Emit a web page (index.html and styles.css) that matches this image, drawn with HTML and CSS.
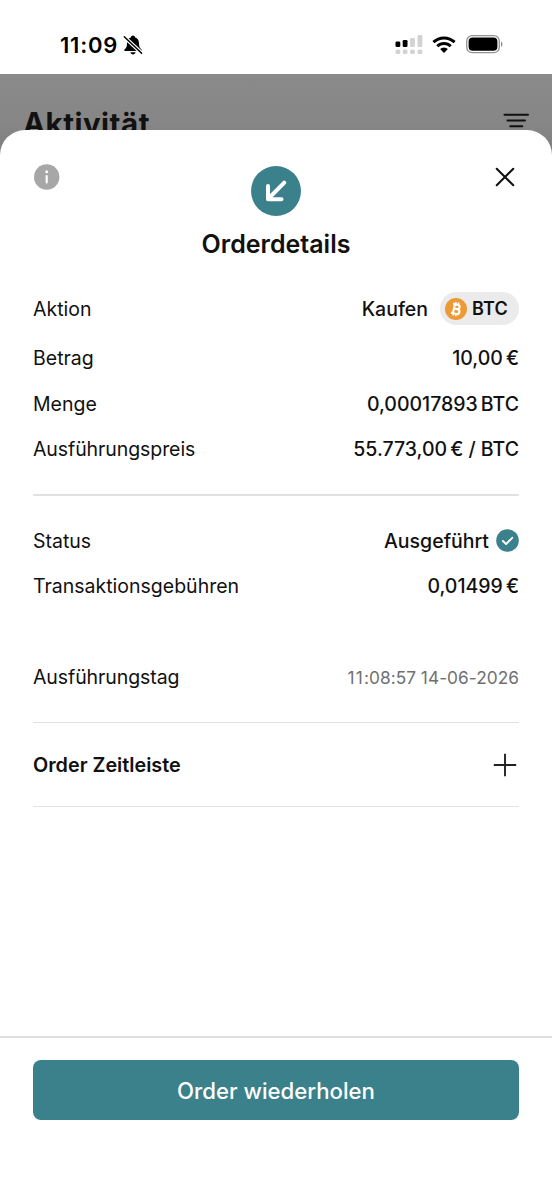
FILE: index.html
```html
<!DOCTYPE html>
<html lang="de">
<head>
<meta charset="utf-8">
<meta name="viewport" content="width=device-width, initial-scale=1">
<title>Orderdetails</title>
<link rel="stylesheet" href="styles.css">
</head>
<body>
<div class="phone">
  <header class="statusbar">
    <div class="clock">
      <span>11:09</span>
      <svg class="bell" width="20" height="20" viewBox="0 0 20 20"><path d="M10 .6c-1.100 0-1.900.8-2 1.700C5.200 3.200 4.100 5.500 4 8.500c-.1 3-.6 4.300-2.300 5.800-.8.800-.4 1.800.7 1.800h15.200c1.100 0 1.500-1 .7-1.800C16.600 12.800 16.100 11.500 16 8.500c-.1-3-1.200-5.300-4-6.200C11.900 1.400 11.100.6 10 .6zM7.400 17.300h5.200c-.3 1.300-1.300 2.100-2.600 2.100s-2.300-.8-2.600-2.100z" fill="#000"/><path d="M1.300 1.800 18.600 18.200" stroke="#fff" stroke-width="3.800"/><path d="M1.300 1.800 18.600 18.200" stroke="#000" stroke-width="1.500" stroke-linecap="round"/></svg>
    </div>
    <div class="indicators">
      <svg class="signal" width="28" height="20" viewBox="0 0 28 20"><g fill="#000"><rect x="0.500" y="6.500" width="4.800" height="5.500" rx="1.300"/><rect x="7.700" y="5" width="4.800" height="7" rx="1.300"/></g><g fill="#d2d2d2"><rect x="15.100" y="3" width="4.800" height="9" rx="1.300"/><rect x="22.500" y="0" width="4.800" height="12" rx="1.300"/><rect x="0.500" y="14.600" width="4.800" height="4.400" rx="1.500"/><rect x="7.700" y="14.600" width="4.800" height="4.400" rx="1.500"/><rect x="15.100" y="14.600" width="4.800" height="4.400" rx="1.500"/><rect x="22.500" y="14.600" width="4.800" height="4.400" rx="1.500"/></g></svg>
      <svg class="wifi" width="24" height="18" viewBox="0 0 24 18"><g fill="none" stroke="#000" stroke-width="3"><path d="M1.400 6.200a15.200 15.200 0 0 1 21.200 0"/><path d="M5.300 10.200a9.500 9.500 0 0 1 13.400 0"/></g><path d="M12 17 8.100 13.100a5.600 5.600 0 0 1 7.800 0z" fill="#000"/></svg>
      <svg class="battery" width="37" height="19" viewBox="0 0 37 19"><rect x=".7" y=".7" width="32.600" height="17" rx="5.500" fill="none" stroke="#929292" stroke-width="1.300"/><rect x="2.600" y="2.600" width="28.800" height="13.200" rx="4" fill="#000"/><path d="M35 6.500c2 .7 2 4.700 0 5.400z" fill="#929292"/></svg>
    </div>
  </header>

  <div class="backdrop">
    <h1 class="page-title">Aktivität</h1>
    <svg class="filter" width="26" height="16" viewBox="0 0 26 16"><path d="M1.500 2.700h23.500M4.500 8.500h17.500M7.300 14.200h12" stroke="#111" stroke-width="2.100" stroke-linecap="round"/></svg>
  </div>

  <main class="sheet">
    <div class="sheet-head">
      <svg class="info" width="26" height="26" viewBox="0 0 26 26"><circle cx="12.700" cy="13" r="12.700" fill="#a7a7a7"/><circle cx="12.700" cy="7.700" r="1.500" fill="#fff"/><path d="M12.700 12v6.400" stroke="#fff" stroke-width="2.100" stroke-linecap="round"/></svg>
      <svg class="order-badge" width="50" height="50" viewBox="0 0 50 50"><circle cx="25" cy="25" r="25" fill="#3a818b"/><path d="M33.300 16.700 17.500 32.500M17 20v13.300h13.500" fill="none" stroke="#fff" stroke-width="4" stroke-linecap="round" stroke-linejoin="round"/></svg>
      <svg class="close" width="20" height="20" viewBox="0 0 20 20"><path d="M1.700 1.700 18.300 18.300M18.300 1.700 1.700 18.300" stroke="#111" stroke-width="2" stroke-linecap="round"/></svg>
    </div>
    <h2 class="sheet-title">Orderdetails</h2>

    <section class="group">
      <div class="row row-action">
        <span class="label">Aktion</span>
        <span class="value value-action">Kaufen
          <span class="chip"><svg width="22" height="22" viewBox="0 0 22 22"><circle cx="11" cy="11" r="11" fill="#ec9a35"/><g transform="rotate(13 11 11)" fill="none" stroke="#fff" stroke-width="2.100"><path d="M7 6.400h4.800a2.200 2.200 0 0 1 0 4.500H8.900M8.900 10.900h3.600a2.400 2.400 0 0 1 0 4.900H7M8.900 6.400v9.400"/><path d="M9.500 4v2.400M12.300 4v2.400M9.500 15.800v2.400M12.300 15.800v2.400" stroke-width="1.400"/></g></svg>BTC</span>
        </span>
      </div>
      <div class="row"><span class="label">Betrag</span><span class="value">10,00<i class="thin"></i>€</span></div>
      <div class="row"><span class="label">Menge</span><span class="value">0,00017893<i class="thin"></i>BTC</span></div>
      <div class="row"><span class="label label-price">Ausführungspreis</span><span class="value">55.773,00<i class="thin"></i>€ / BTC</span></div>
    </section>

    <section class="group group-status">
      <div class="row"><span class="label">Status</span><span class="value value-status">Ausgeführt<svg width="23" height="23" viewBox="0 0 23 23"><circle cx="11.500" cy="11.500" r="11.300" fill="#3a818b"/><path d="m6.900 12 3.200 3 6.100-6.200" fill="none" stroke="#fff" stroke-width="1.900" stroke-linecap="round" stroke-linejoin="round"/></svg></span></div>
      <div class="row"><span class="label">Transaktionsgebühren</span><span class="value">0,01499<i class="thin"></i>€</span></div>
      <div class="row row-date"><span class="label label-price">Ausführungstag</span><span class="date"><span class="hour">11</span>:08:57 14-06-2026</span></div>
    </section>

    <section class="timeline">
      <span>Order Zeitleiste</span>
      <svg width="24" height="24" viewBox="0 0 24 24"><path d="M12 .8v22.400M.8 12h22.400" stroke="#222" stroke-width="1.900"/></svg>
    </section>

    <footer class="actions"><button class="repeat" type="button">Order wiederholen</button></footer>
  </main>
</div>
</body>
</html>
```
FILE: styles.css
```css
* { box-sizing: border-box; }
body { margin: 0; background: #fff; color: #111; font-family: Inter, "Liberation Sans", sans-serif; }
svg { display: block; flex: none; }
.phone { width: 552px; height: 1200px; display: flex; flex-direction: column; overflow: hidden; }
.statusbar { height: 74px; flex: none; display: flex; justify-content: space-between; padding: 0 49px 0 60px; color: #000; }
.clock { display: flex; align-items: center; gap: 5px; height: 90px; font-size: 22px; font-weight: 600; }
.clock span { width: 58px; letter-spacing: .8px; }
.indicators { display: flex; align-items: center; height: 89px; }
.wifi { margin-left: 9px; }
.battery { margin-left: 10px; }
.backdrop { height: 90px; flex: none; background: linear-gradient(#8a8a8a 0, #868686 50px, #7c7c7c 90px); display: flex; justify-content: space-between; align-items: flex-start; padding: 31px 23px 0 23px; }
.page-title { margin: 0; font-size: 29.500px; line-height: 36px; font-weight: 700; letter-spacing: .5px; color: #111; }
.filter { margin-top: 7px; }
.sheet { position: relative; margin-top: -34px; flex: 1; display: flex; flex-direction: column; background: #fff; border-radius: 25px 25px 0 0; }
.sheet-head { display: grid; grid-template-columns: 1fr 50px 1fr; padding: 36px 37px 0; }
.info { margin: -2px 0 0 -3px; }
.close { justify-self: end; margin-top: 1px; }
.sheet-title { margin: 12px 0 0; text-align: center; font-size: 25px; line-height: 32px; font-weight: 600; }
.group { margin: 0 33px; padding-top: 22px; border-bottom: 2px solid #e1e1e1; height: 236px; }
.row { display: flex; justify-content: space-between; align-items: center; height: 45.500px; font-size: 19.500px; }
.row-action { height: 53.500px; }
.label-price { letter-spacing: -.08px; }
.value { font-weight: 500; display: flex; align-items: center; white-space: pre; }
.value-action { white-space: normal; gap: 12px; }
.thin { width: 3px; }
.chip { display: flex; align-items: center; gap: 5px; height: 33px; padding: 0 11px 0 5px; border-radius: 17px; background: #ebebeb; font-size: 18px; font-weight: 600; letter-spacing: .2px; }
.value-status { gap: 7px; }
.group-status { height: 227px; padding-top: 22px; border-bottom-width: 1px; }
.row-date { margin-top: 45.500px; }
.date { font-size: 17.300px; letter-spacing: .03px; color: #707070; }
.hour { letter-spacing: 1.200px; }
.timeline { margin: 0 33px; height: 84px; flex: none; display: flex; justify-content: space-between; align-items: center; border-bottom: 1px solid #e4e4e4; padding-right: 2px; font-size: 19.800px; font-weight: 600; }
.actions { margin-top: auto; height: 164px; border-top: 2px solid #dedede; padding: 22px 33px 0; }
.repeat { display: block; width: 100%; height: 60px; border: 0; border-radius: 8px; background: #3a818b; color: #fff; font: 500 22.200px Inter, "Liberation Sans", sans-serif; }
```
